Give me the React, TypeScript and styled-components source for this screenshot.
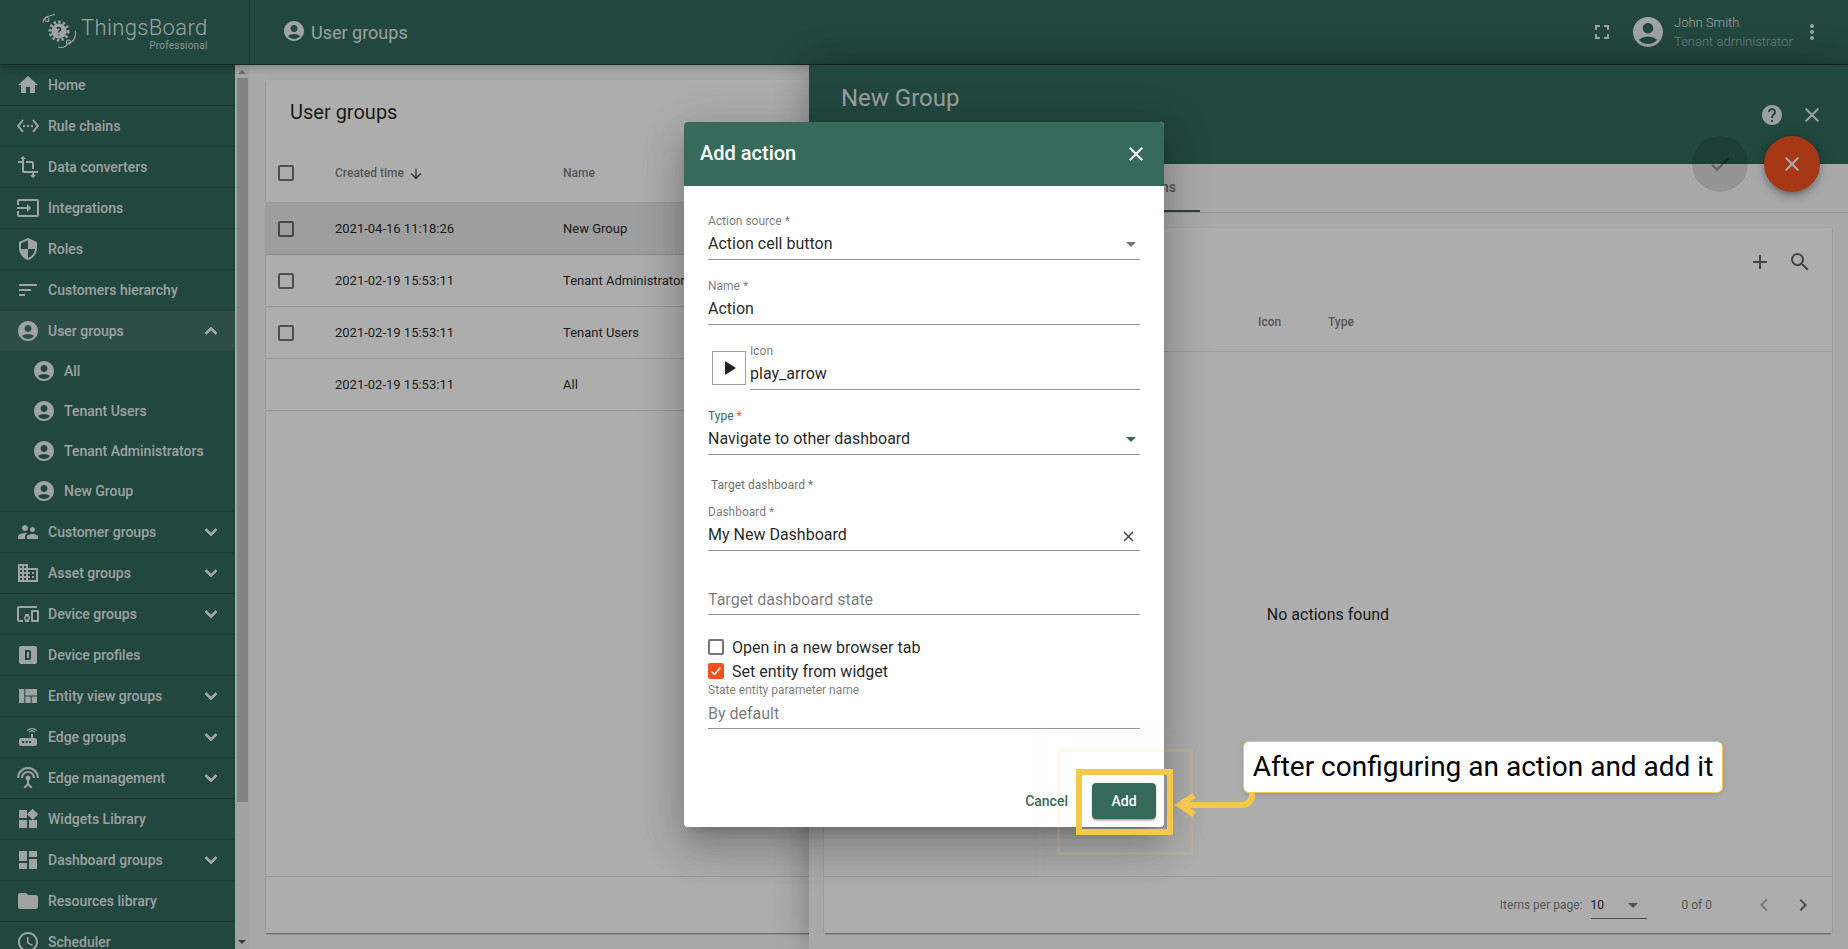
import React from 'react';
import styled, { createGlobalStyle } from 'styled-components';
import {
  MdHome, MdSettingsEthernet, MdTransform, MdInput, MdSecurity, MdSort, MdAccountCircle,
  MdSupervisorAccount, MdDomain, MdDevicesOther, MdViewQuilt, MdRouter, MdSettingsInputAntenna,
  MdWidgets, MdDashboard, MdFolder, MdSchedule, MdKeyboardArrowUp, MdKeyboardArrowDown,
  MdFullscreen, MdMoreVert, MdHelp, MdClose, MdCheck, MdAdd, MdSearch, MdArrowDownward,
  MdChevronLeft, MdChevronRight, MdPlayArrow,
} from 'react-icons/md';

const PRIMARY = '#366a5b';
const SHELL = '#31695d';
const ACCENT = '#f4511e';
const YELLOW = '#f5c84b';

const Global = createGlobalStyle`
  html, body { margin: 0; padding: 0; height: 100%; overflow: hidden; background: #fafafa; }
  body { font-family: Roboto, "Liberation Sans", sans-serif; color: rgba(0,0,0,.87); }
  * { box-sizing: border-box; }
`;

const Page = styled.div`
  height: 949px; display: flex; flex-direction: column; position: relative; overflow: hidden;
`;
const TopBar = styled.header`
  height: 65px; flex: none; display: flex; align-items: center; background: ${SHELL};
  border-bottom: 1px solid rgba(0,0,0,.42); color: rgba(255,255,255,.9); position: relative; z-index: 2;
  box-shadow: 0 3px 8px rgba(0,0,0,.22);
`;
const LogoCell = styled.div`
  width: 250px; height: 64px; flex: none; display: flex; align-items: center; padding-left: 42px;
  border-right: 1px solid rgba(0,0,0,.07);
`;
const LogoText = styled.div`display: flex; flex-direction: column; align-items: flex-end; margin-left: 3px; margin-top: 2px;`;
const LogoName = styled.span`font-size: 22px; font-weight: 300; line-height: 26px; letter-spacing: .35px;`;
const LogoSub = styled.span`font-size: 10px; line-height: 10px; opacity: .85; letter-spacing: .2px;`;
const BarTitle = styled.div`
  display: flex; align-items: center; gap: 5px; margin-left: 32px; font-size: 18px; line-height: 24px; padding-top: 2px;
  svg { margin-top: -4px; }
`;
const Spacer = styled.div`flex: 1;`;
const UserBlock = styled.div`display: flex; align-items: center; margin-right: 24px;`;
const UserText = styled.div`
  width: 126px; margin-left: 8px; font-size: 13px; font-weight: 300; line-height: 19px; margin-top: -1px;
  div + div { opacity: .62; }
`;
const Body = styled.div`flex: 1; display: flex; min-height: 0;`;
const Sidebar = styled.nav`width: 235px; flex: none; background: ${SHELL}; overflow: hidden;`;
const NavRow = styled.div<{ $active?: boolean; $flat?: boolean }>`
  height: ${p => (p.$flat ? 40 : 41)}px; display: flex; align-items: center; padding: 0 12px 0 16px;
  color: rgba(255,255,255,.9); font-size: 14px; font-weight: 500;
  background: ${p => (p.$active ? 'rgba(255,255,255,.08)' : 'transparent')};
  border-bottom: ${p => (p.$flat ? '0' : '1px solid rgba(0,0,0,.1)')};
`;
const NavIconBox = styled.span`width: 24px; height: 24px; display: flex; align-items: center; justify-content: center; margin-right: 8px;`;
const NavLabel = styled.span`flex: 1; white-space: nowrap;`;
const Chevron = styled.span`display: flex; path:not([fill='none']) { stroke: currentColor; stroke-width: .9; }`;
const SubList = styled.div`border-bottom: 1px solid rgba(0,0,0,.1);`;
const SubRow = styled.div`
  height: 40px; display: flex; align-items: center; padding-left: 32px; color: rgba(255,255,255,.9);
  font-size: 14px; font-weight: 500;
`;
const ScrollTrack = styled.div`
  width: 15px; flex: none; background: #f1f1f1; display: flex; flex-direction: column; align-items: center;
  justify-content: space-between; padding: 5px 0 5px; border-right: 1px solid #f4f4f4;
`;
const ScrollThumb = styled.div`width: 11px; height: 724px; background: #c1c1c1; margin-top: 4px;`;
const ScrollCap = styled.span<{ $down?: boolean }>`
  width: 0; height: 0; border-left: 4px solid transparent; border-right: 4px solid transparent;
  ${p => (p.$down ? 'border-top: 4px solid #505050;' : 'border-bottom: 4px solid #a3a3a3;')}
`;
const ScrollBox = styled.div`display: flex; flex-direction: column; align-items: center;`;
const Main = styled.main`flex: 1; min-width: 0; padding: 15px 16px 16px; display: flex;`;
const Card = styled.section`
  flex: 1; min-width: 0; background: #fff; display: flex; flex-direction: column;
  box-shadow: 0 2px 1px -1px rgba(0,0,0,.2), 0 1px 1px rgba(0,0,0,.14), 0 1px 3px rgba(0,0,0,.12);
`;
const CardTitle = styled.h2`margin: 0; height: 64px; padding: 16px 24px 0; font-size: 20px; font-weight: 400; line-height: 32px;`;
const TableRow = styled.div<{ $head?: boolean; $selected?: boolean }>`
  display: grid; grid-template-columns: 57px 228px 1fr; align-items: center; padding-left: 12px;
  height: ${p => (p.$head ? 59 : 52)}px; border-bottom: 1px solid rgba(0,0,0,.12);
  background: ${p => (p.$selected ? '#e9e9e9' : 'transparent')};
  font-size: ${p => (p.$head ? 12 : 13)}px; font-weight: ${p => (p.$head ? 500 : 400)};
  color: ${p => (p.$head ? 'rgba(0,0,0,.54)' : 'rgba(0,0,0,.87)')};
  white-space: nowrap;
`;
const SortCell = styled.span`display: flex; align-items: center; gap: 4px; svg { margin-top: 2px; color: rgba(0,0,0,.7); }`;
const Box = styled.span`
  display: block; width: 16px; height: 16px; border: 2px solid rgba(0,0,0,.54); border-radius: 2px; flex: none;
`;
const CheckedBox = styled.span`
  width: 16px; height: 16px; border-radius: 2px; background: ${ACCENT}; color: #fff; flex: none;
  display: flex; align-items: center; justify-content: center;
`;
const CardFill = styled.div`flex: 1;`;
const CardFoot = styled.footer`
  height: 57px; flex: none; border-top: 1px solid rgba(0,0,0,.12); display: flex; align-items: center;
  font-size: 12px; color: rgba(0,0,0,.54); padding-right: 17px; justify-content: flex-end;
`;
const PageSize = styled.div`
  width: 56px; height: 26px; margin-left: 8px; border-bottom: 1px solid rgba(0,0,0,.54); display: flex;
  align-items: center; justify-content: space-between; color: rgba(0,0,0,.87); padding: 0 5px 0 0; margin-top: 1px;
`;
const RangeLabel = styled.span`margin: 0 40px 0 35px;`;
const PagerIcon = styled.span<{ $off?: boolean }>`
  width: 24px; height: 24px; display: flex; color: rgba(0,0,0,${p => (p.$off ? '.3' : '.54')}); & + & { margin-left: 15px; }
`;
const Drawer = styled.aside`
  position: absolute; left: 809px; right: 0; top: 65px; bottom: 0; background: #fafafa; display: flex; flex-direction: column;
  z-index: 3; box-shadow: 0 0 36px rgba(0,0,0,.32);
`;
const DrawerHead = styled.div`
  height: 99px; flex: none; background: ${SHELL}; color: rgba(255,255,255,.87); display: flex;
  justify-content: space-between; padding: 17px 24px 0 32px;
`;
const DrawerTitle = styled.h2`margin: 0; font-size: 24px; font-weight: 400; line-height: 32px;`;
const DrawerIcons = styled.div`display: flex; gap: 16px; margin-top: 21px; height: 24px;`;
const FabRow = styled.div`position: absolute; top: 71px; right: 28px; display: flex; gap: 16px;`;
const Fab = styled.span<{ $off?: boolean }>`
  width: 56px; height: 56px; border-radius: 50%; display: flex; align-items: center; justify-content: center;
  background: ${p => (p.$off ? 'rgba(0,0,0,.12)' : ACCENT)}; color: ${p => (p.$off ? 'rgba(0,0,0,.38)' : '#fff')};
  box-shadow: ${p => (p.$off ? 'none' : '0 3px 5px -1px rgba(0,0,0,.2), 0 6px 10px rgba(0,0,0,.14), 0 1px 18px rgba(0,0,0,.12)')};
`;
const TabBar = styled.div`
  height: 49px; flex: none; display: flex; border-bottom: 1px solid rgba(0,0,0,.12); padding-left: 78px;
`;
const Tab = styled.div<{ $on?: boolean }>`
  height: 48px; padding: 0 24px; display: flex; align-items: center; font-size: 14px; font-weight: 500;
  color: rgba(0,0,0,.54); border-bottom: 2px solid ${p => (p.$on ? PRIMARY : 'transparent')};
`;
const DrawerBody = styled.div`flex: 1; padding: 15px 16px 16px 15px; display: flex; min-height: 0;`;
const ActionTools = styled.div`
  height: 62px; flex: none; display: flex; justify-content: flex-end; align-items: center; gap: 16px;
  padding: 6px 20px 0 0; color: rgba(0,0,0,.62);
`;
const ActionHead = styled.div`
  height: 62px; flex: none; padding: 2px 0 0 434px; display: flex; align-items: center; border-bottom: 1px solid rgba(0,0,0,.12);
  font-size: 12px; font-weight: 500; color: rgba(0,0,0,.54);
`;
const ActionCol = styled.span`width: 70px;`;
const EmptyNote = styled.div`flex: 1; display: flex; align-items: center; justify-content: center; font-size: 16px;`;
const Backdrop = styled.div`position: absolute; inset: 0; background: rgba(0,0,0,.32); z-index: 5;`;
const DialogLayer = styled.div`position: absolute; inset: 0; z-index: 6; display: flex; align-items: center; justify-content: center;`;
const Dialog = styled.div`
  width: 480px; height: 705px; background: #fff; border-radius: 4px; overflow: hidden; display: flex; flex-direction: column;
  box-shadow: 0 11px 15px -7px rgba(0,0,0,.2), 0 24px 38px 3px rgba(0,0,0,.14), 0 9px 46px 8px rgba(0,0,0,.12);
`;
const DialogHead = styled.div`
  height: 64px; flex: none; background: ${PRIMARY}; color: #fff; display: flex; align-items: center; justify-content: space-between;
  padding: 0 16px; font-size: 20px; font-weight: 500;
  span { margin-top: -2px; }
`;
const DialogForm = styled.div`flex: 1; display: flex; flex-direction: column; padding: 28px 24px 0;`;
const Field = styled.div<{ $gap?: number; $spacer?: boolean }>`
  margin-bottom: ${p => p.$gap ?? 19}px; border-bottom: 1px solid rgba(0,0,0,.42); flex: none;
  ${p => (p.$spacer ? 'padding-top: 17px;' : '')}
`;
const FieldLabel = styled.div<{ $focus?: boolean }>`
  font-size: 12px; line-height: 14px; margin-bottom: 3px; color: ${p => (p.$focus ? PRIMARY : 'rgba(0,0,0,.54)')};
  white-space: nowrap;
`;
const Star = styled.span<{ $red?: boolean }>`color: ${p => (p.$red ? ACCENT : 'inherit')};`;
const FieldValue = styled.div<{ $muted?: boolean; $drop?: number }>`
  height: 28px; padding: ${p => p.$drop ?? 1}px 0 ${p => 4 - (p.$drop ?? 1)}px; font-size: 16px; line-height: 24px; display: flex; align-items: center; justify-content: space-between;
  color: ${p => (p.$muted ? 'rgba(0,0,0,.54)' : 'rgba(0,0,0,.87)')};
`;
const Caret = styled.span<{ $on?: boolean }>`
  width: 0; height: 0; margin-right: 4px; border-left: 5px solid transparent; border-right: 5px solid transparent;
  border-top: 5px solid ${p => (p.$on ? PRIMARY : 'rgba(0,0,0,.54)')};
`;
const ClearIcon = styled.span`display: flex; margin-right: 3px; margin-top: 3px; color: rgba(0,0,0,.75);`;
const IconRow = styled.div`display: flex; align-items: center; padding-left: 4px; margin-bottom: 19px; flex: none;`;
const IconPreview = styled.div`
  width: 34px; height: 34px; flex: none; border: 1px solid rgba(0,0,0,.38); display: flex; align-items: center; justify-content: center;
  margin-top: 2px; margin-right: 4px; color: rgba(0,0,0,.87);
`;
const IconField = styled(Field)`flex: 1; margin-bottom: 0;`;
const GroupCaption = styled.div`
  font-size: 12px; line-height: 14px; color: rgba(0,0,0,.6); padding-left: 3px; margin: 4px 0 13px; flex: none;
`;
const CheckRow = styled.div<{ $gap: number }>`
  display: flex; align-items: center; gap: 8px; height: 16px; margin-bottom: ${p => p.$gap}px; font-size: 16px; flex: none;
  white-space: nowrap; color: rgba(0,0,0,.87);
`;
const DialogActions = styled.div`
  flex: none; display: flex; justify-content: flex-end; align-items: center; gap: 8px; padding: 0 8px 8px;
`;
const TextButton = styled.span`
  height: 36px; padding: 0 16px; display: flex; align-items: center; font-size: 14px; font-weight: 500; color: ${PRIMARY};
`;
const RaisedButton = styled.span`
  width: 64px; height: 36px; border-radius: 4px; background: ${PRIMARY}; color: #fff; display: flex; align-items: center;
  justify-content: center; font-size: 14px; font-weight: 500;
  box-shadow: 0 3px 1px -2px rgba(0,0,0,.2), 0 2px 2px rgba(0,0,0,.14), 0 1px 5px rgba(0,0,0,.12);
`;
const Frame = styled.div<{ $l: number; $t: number; $w: number; $h: number; $b: number; $a: number }>`
  position: absolute; z-index: 7; left: ${p => p.$l}px; top: ${p => p.$t}px; width: ${p => p.$w}px; height: ${p => p.$h}px;
  border: ${p => p.$b}px solid rgba(245,200,75,${p => p.$a});
`;
const Callout = styled.div`
  position: absolute; z-index: 7; left: 1243px; top: 741px; width: 480px; height: 52px; background: #fff;
  border: 1px solid ${YELLOW}; border-radius: 6px; display: flex; align-items: center; justify-content: center;
  color: #000; font-size: 28px; white-space: nowrap; padding-bottom: 2px; box-shadow: 0 2px 6px rgba(0,0,0,.12);
`;
const ArrowSvg = styled.svg`position: absolute; z-index: 7; left: 1170px; top: 790px;`;

const DBox = () => (
  <svg width="24" height="24" viewBox="0 0 24 24" fill="currentColor">
    <path fillRule="evenodd" d="M5 3h14a2 2 0 0 1 2 2v14a2 2 0 0 1-2 2H5a2 2 0 0 1-2-2V5a2 2 0 0 1 2-2zM9 7v10h4a2 2 0 0 0 2-2V9a2 2 0 0 0-2-2zM11 9h2v6h-2z" />
  </svg>
);

const TickMark = () => (
  <svg width="16" height="16" viewBox="0 0 16 16" fill="none" stroke="currentColor" strokeWidth="1.5">
    <path d="M3.500 8.500l3 3 6-7" />
  </svg>
);

const Logo = () => (
  <svg width="36" height="36" viewBox="0 0 36 36" fill="none" stroke="currentColor" strokeWidth="1.2">
    <circle cx="17" cy="17" r="7.500" fill="currentColor" stroke="none" />
    <circle cx="17" cy="17" r="9" strokeWidth="3" strokeDasharray="2.4 2.2" />
    <path d="M15 14.500c1-1.600 4-1 3.600 1-.3 1.300-2 1.400-1.800 3M16.600 20.500v1" stroke="#24473c" strokeWidth="1.500" />
    <path d="M1 8.500C1.500 5 4 2.500 7 2l6-1.500" />
    <circle cx="5" cy="5.500" r="2" />
    <path d="M33.500 17c.3 5-1 9-4 11l-3 1" />
    <path d="M16 33c4 1 8 0 9.500-3" />
    <circle cx="26.500" cy="28" r="2" />
  </svg>
);

const mainNavTop = [
  { icon: <MdHome size={24} />, label: 'Home' },
  { icon: <MdSettingsEthernet size={24} />, label: 'Rule chains' },
  { icon: <MdTransform size={24} />, label: 'Data converters' },
  { icon: <MdInput size={24} />, label: 'Integrations' },
  { icon: <MdSecurity size={24} />, label: 'Roles' },
  { icon: <MdSort size={24} />, label: 'Customers hierarchy' },
];
const mainNavBottom = [
  { icon: <MdSupervisorAccount size={24} />, label: 'Customer groups', more: true },
  { icon: <MdDomain size={24} />, label: 'Asset groups', more: true },
  { icon: <MdDevicesOther size={24} />, label: 'Device groups', more: true },
  { icon: <DBox />, label: 'Device profiles' },
  { icon: <MdViewQuilt size={24} />, label: 'Entity view groups', more: true },
  { icon: <MdRouter size={24} />, label: 'Edge groups', more: true },
  { icon: <MdSettingsInputAntenna size={24} />, label: 'Edge management', more: true },
  { icon: <MdWidgets size={24} />, label: 'Widgets Library' },
  { icon: <MdDashboard size={24} />, label: 'Dashboard groups', more: true },
  { icon: <MdFolder size={24} />, label: 'Resources library' },
  { icon: <MdSchedule size={24} />, label: 'Scheduler' },
];
const subNav = ['All', 'Tenant Users', 'Tenant Administrators', 'New Group'];
const groups = [
  { time: '2021-04-16 11:18:26', name: 'New Group', check: true, selected: true },
  { time: '2021-02-19 15:53:11', name: 'Tenant Administrators', check: true },
  { time: '2021-02-19 15:53:11', name: 'Tenant Users', check: true },
  { time: '2021-02-19 15:53:11', name: 'All', check: false },
];

export default function App() {
  return (
    <Page>
      <Global />
      <TopBar>
        <LogoCell>
          <Logo />
          <LogoText>
            <LogoName>ThingsBoard</LogoName>
            <LogoSub>Professional</LogoSub>
          </LogoText>
        </LogoCell>
        <BarTitle><MdAccountCircle size={24} />User groups</BarTitle>
        <Spacer />
        <UserBlock>
          <MdFullscreen size={24} />
          <MdAccountCircle size={36} style={{ marginLeft: 16 }} />
          <UserText><div>John Smith</div><div>Tenant administrator</div></UserText>
          <MdMoreVert size={24} />
        </UserBlock>
      </TopBar>
      <Body>
        <Sidebar>
          {mainNavTop.map(n => (
            <NavRow key={n.label}><NavIconBox>{n.icon}</NavIconBox><NavLabel>{n.label}</NavLabel></NavRow>
          ))}
          <NavRow $active $flat>
            <NavIconBox><MdAccountCircle size={24} /></NavIconBox>
            <NavLabel>User groups</NavLabel>
            <Chevron><MdKeyboardArrowUp size={24} /></Chevron>
          </NavRow>
          <SubList>
            {subNav.map(s => (
              <SubRow key={s}><NavIconBox><MdAccountCircle size={24} /></NavIconBox>{s}</SubRow>
            ))}
          </SubList>
          {mainNavBottom.map(n => (
            <NavRow key={n.label}>
              <NavIconBox>{n.icon}</NavIconBox>
              <NavLabel>{n.label}</NavLabel>
              {n.more && <Chevron><MdKeyboardArrowDown size={24} /></Chevron>}
            </NavRow>
          ))}
        </Sidebar>
        <ScrollTrack>
          <ScrollBox><ScrollCap /><ScrollThumb /></ScrollBox>
          <ScrollCap $down />
        </ScrollTrack>
        <Main>
          <Card>
            <CardTitle>User groups</CardTitle>
            <TableRow $head>
              <Box />
              <SortCell>Created time <MdArrowDownward size={16} /></SortCell>
              <span>Name</span>
            </TableRow>
            {groups.map(g => (
              <TableRow key={g.name} $selected={g.selected}>
                {g.check ? <Box /> : <span />}
                <span>{g.time}</span>
                <span>{g.name}</span>
              </TableRow>
            ))}
            <CardFill />
            <CardFoot />
          </Card>
        </Main>
      </Body>

      <Drawer>
        <DrawerHead>
          <DrawerTitle>New Group</DrawerTitle>
          <DrawerIcons><MdHelp size={24} /><MdClose size={24} /></DrawerIcons>
        </DrawerHead>
        <FabRow>
          <Fab $off><MdCheck size={24} /></Fab>
          <Fab><MdClose size={24} /></Fab>
        </FabRow>
        <TabBar>
          <Tab>Details</Tab>
          <Tab>Permissions</Tab>
          <Tab $on>Actions</Tab>
        </TabBar>
        <DrawerBody>
          <Card>
            <ActionTools><MdAdd size={24} /><MdSearch size={24} /></ActionTools>
            <ActionHead><ActionCol>Icon</ActionCol><ActionCol>Type</ActionCol></ActionHead>
            <EmptyNote>No actions found</EmptyNote>
            <CardFoot>
              Items per page:
              <PageSize>10<Caret /></PageSize>
              <RangeLabel>0 of 0</RangeLabel>
              <PagerIcon $off><MdChevronLeft size={24} /></PagerIcon>
              <PagerIcon><MdChevronRight size={24} /></PagerIcon>
            </CardFoot>
          </Card>
        </DrawerBody>
      </Drawer>

      <Backdrop />
      <DialogLayer>
        <Dialog>
          <DialogHead><span>Add action</span><MdClose size={24} /></DialogHead>
          <DialogForm>
            <Field>
              <FieldLabel>Action source *</FieldLabel>
              <FieldValue>Action cell button<Caret /></FieldValue>
            </Field>
            <Field>
              <FieldLabel>Name *</FieldLabel>
              <FieldValue>Action</FieldValue>
            </Field>
            <IconRow>
              <IconPreview><MdPlayArrow size={24} /></IconPreview>
              <IconField>
                <FieldLabel>Icon</FieldLabel>
                <FieldValue>play_arrow</FieldValue>
              </IconField>
            </IconRow>
            <Field $gap={19}>
              <FieldLabel $focus>Type <Star $red>*</Star></FieldLabel>
              <FieldValue>Navigate to other dashboard<Caret $on /></FieldValue>
            </Field>
            <GroupCaption>Target dashboard *</GroupCaption>
            <Field $gap={18}>
              <FieldLabel>Dashboard *</FieldLabel>
              <FieldValue>My New Dashboard<ClearIcon><MdClose size={17} /></ClearIcon></FieldValue>
            </Field>
            <Field $gap={24} $spacer>
              <FieldValue $muted $drop={2}>Target dashboard state</FieldValue>
            </Field>
            <CheckRow $gap={8}><Box />Open in a new browser tab</CheckRow>
            <CheckRow $gap={4}><CheckedBox><TickMark /></CheckedBox>Set entity from widget</CheckRow>
            <Field>
              <FieldLabel>State entity parameter name</FieldLabel>
              <FieldValue $muted $drop={2}>By default</FieldValue>
            </Field>
          </DialogForm>
          <DialogActions>
            <TextButton>Cancel</TextButton>
            <RaisedButton>Add</RaisedButton>
          </DialogActions>
        </Dialog>
      </DialogLayer>

      <Frame $l={1038} $t={727} $w={174} $h={150} $b={3} $a={0.025} />
      <Frame $l={1057} $t={749} $w={136} $h={106} $b={3} $a={0.13} />
      <Frame $l={1076} $t={769} $w={97} $h={66} $b={6} $a={1} />
      <Callout>After configuring an action and add it</Callout>
      <ArrowSvg width="90" height="30" viewBox="0 0 90 30" fill="none" stroke={YELLOW} strokeWidth="6">
        <path d="M82 3v2a10 10 0 0 1-10 10H11" />
        <polyline points="24,5.500 10,15 24,24.500" />
      </ArrowSvg>
    </Page>
  );
}
